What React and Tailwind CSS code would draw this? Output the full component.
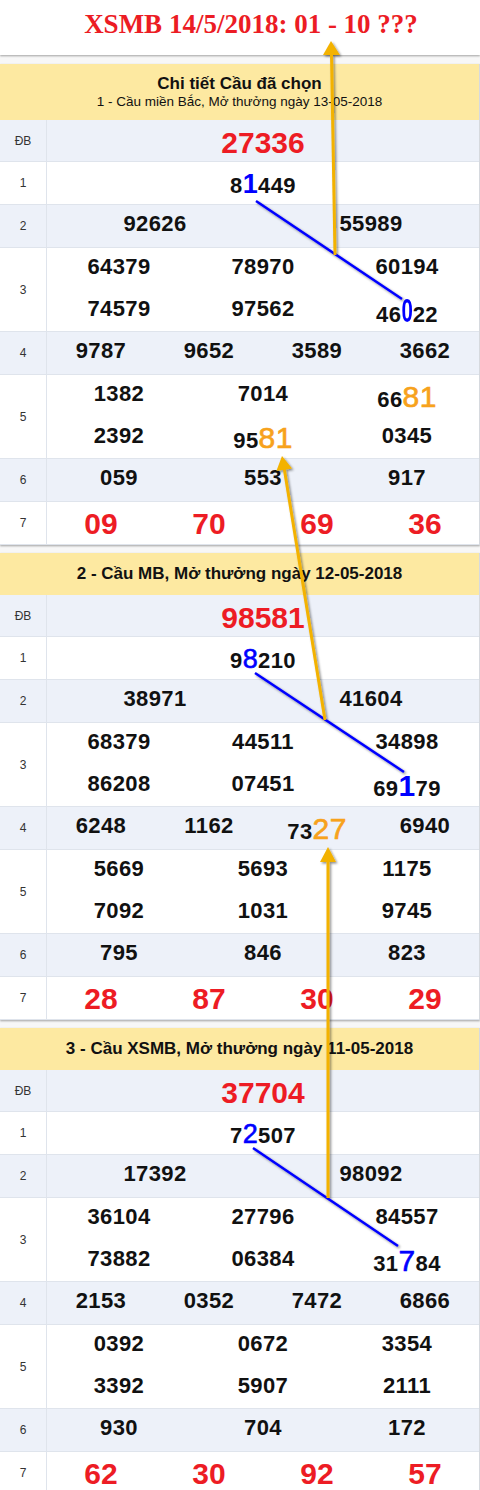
import React from "react";

const HI = {
  b1: "text-[#0000ff] text-[27px] font-bold",
  b0: "inline-block text-[#0000ff] text-[33px] font-bold scale-x-[0.62] -mx-[3.5px] tracking-normal",
  b8: "text-[#0000ff] text-[27px] font-normal [-webkit-text-stroke:0.6px_#0000ff]",
  b1b: "text-[#0000ff] text-[30px] font-bold",
  b2: "text-[#0000ff] text-[27px] font-normal [-webkit-text-stroke:0.6px_#0000ff]",
  b7: "text-[#0000ff] text-[30px] font-normal [-webkit-text-stroke:0.6px_#0000ff]",
  o: "text-[#f7a21c] text-[30px] font-normal [-webkit-text-stroke:0.7px_#f7a21c]",
};

const SECTIONS = [
  {
    db: "27336",
    r1: [["8"], ["1", "b1"], ["449"]],
    r2: ["92626", "55989"],
    r3: [
      ["64379", "78970", "60194"],
      ["74579", "97562", [["46"], ["0", "b0"], ["22"]]],
    ],
    r4: ["9787", "9652", "3589", "3662"],
    r5: [
      ["1382", "7014", [["66"], ["81", "o"]]],
      ["2392", [["95"], ["81", "o"]], "0345"],
    ],
    r6: ["059", "553", "917"],
    r7: ["09", "70", "69", "36"],
  },
  {
    db: "98581",
    r1: [["9"], ["8", "b8"], ["210"]],
    r2: ["38971", "41604"],
    r3: [
      ["68379", "44511", "34898"],
      ["86208", "07451", [["69"], ["1", "b1b"], ["79"]]],
    ],
    r4: ["6248", "1162", [["73"], ["27", "o"]], "6940"],
    r5: [
      ["5669", "5693", "1175"],
      ["7092", "1031", "9745"],
    ],
    r6: ["795", "846", "823"],
    r7: ["28", "87", "30", "29"],
  },
  {
    db: "37704",
    r1: [["7"], ["2", "b2"], ["507"]],
    r2: ["17392", "98092"],
    r3: [
      ["36104", "27796", "84557"],
      ["73882", "06384", [["31"], ["7", "b7"], ["84"]]],
    ],
    r4: ["2153", "0352", "7472", "6866"],
    r5: [
      ["0392", "0672", "3354"],
      ["3392", "5907", "2111"],
    ],
    r6: ["930", "704", "172"],
    r7: ["62", "30", "92", "57"],
  },
];

function Num({ v }) {
  if (typeof v === "string") return <span>{v}</span>;
  return (
    <span>
      {v.map((s, i) =>
        s.length === 1 ? (
          <span key={i}>{s[0]}</span>
        ) : (
          <span key={i} className={HI[s[1]]}>
            {s[0]}
          </span>
        )
      )}
    </span>
  );
}

function Line({ v, tall }) {
  const hi = typeof v !== "string";
  return (
    <div
      className={`flex ${tall ? "h-[42px]" : "h-[41px]"} items-center justify-center text-[22px] font-bold leading-[22px] tracking-[0.4px] text-[#111] ${
        hi ? "pt-[4px]" : "pb-[4px]"
      }`}
    >
      <Num v={v} />
    </div>
  );
}

function Row({ label, alt, children }) {
  return (
    <div
      className={`flex border-b border-[#dfe4ec] ${
        alt ? "bg-[#edf1f9]" : "bg-white"
      }`}
    >
      <div className="flex w-[47px] shrink-0 items-center justify-center border-r border-[#dfe4ec] text-[12px] text-[#333]">
        {label}
      </div>
      <div className="min-w-0 flex-1">{children}</div>
    </div>
  );
}

function Grid({ items, cols }) {
  const cls =
    cols === 2 ? "grid grid-cols-2" : cols === 3 ? "grid grid-cols-3" : "grid grid-cols-4";
  return (
    <div className={cls}>
      {items.map((v, i) => (
        <Line key={i} v={v} tall />
      ))}
    </div>
  );
}

function Double({ lines }) {
  return (
    <div>
      <div className="grid grid-cols-3">
        {lines[0].map((v, i) => (
          <Line key={i} v={v} tall />
        ))}
      </div>
      <div className="grid grid-cols-3">
        {lines[1].map((v, i) => (
          <Line key={i} v={v} />
        ))}
      </div>
    </div>
  );
}

function Table({ s }) {
  return (
    <div>
      <Row label="ĐB" alt>
        <div className="flex h-[41px] items-center justify-center pt-[4px] text-[30px] font-bold leading-[30px] text-[#ed1c24]">
          {s.db}
        </div>
      </Row>
      <Row label="1">
        <Line v={s.r1} tall />
      </Row>
      <Row label="2" alt>
        <Grid items={s.r2} cols={2} />
      </Row>
      <Row label="3">
        <Double lines={s.r3} />
      </Row>
      <Row label="4" alt>
        <Grid items={s.r4} cols={4} />
      </Row>
      <Row label="5">
        <Double lines={s.r5} />
      </Row>
      <Row label="6" alt>
        <Grid items={s.r6} cols={3} />
      </Row>
      <Row label="7">
        <div className="grid h-[42px] grid-cols-4 pt-[2px] text-[30px] font-bold leading-[30px] text-[#ed1c24]">
          {s.r7.map((v, i) => (
            <div key={i} className="flex items-center justify-center">
              {v}
            </div>
          ))}
        </div>
      </Row>
    </div>
  );
}

export default function App() {
  return (
    <div className="relative min-h-[1490px] w-[480px] overflow-hidden bg-[#f7f7f7] font-['Liberation_Sans',Arial,sans-serif]">
      <div className="h-[55px] bg-white pl-[22px] pt-[8px] text-center font-['Liberation_Serif','Times_New_Roman',serif] text-[27px] font-bold leading-[32px] text-[#ec1c24] shadow-[0_1px_2px_rgba(0,0,0,0.35)]">
        XSMB 14/5/2018: 01 - 10 ???
      </div>

      <div className="mt-[9px] border-r border-[#d6d9de] shadow-[0_1px_2px_rgba(0,0,0,0.35)]">
        <div className="flex h-[56px] flex-col items-center justify-center bg-[#fde9a1] text-[#111]">
          <div className="text-[17px] font-bold leading-[18px]">Chi tiết Cầu đã chọn</div>
          <div className="mt-[1px] text-[13.5px] leading-[16px]">
            1 - Cầu miền Bắc, Mở thưởng ngày 13-05-2018
          </div>
        </div>
        <Table s={SECTIONS[0]} />
      </div>

      <div className="mt-[8px] border-r border-[#d6d9de] shadow-[0_1px_2px_rgba(0,0,0,0.35)]">
        <div className="flex h-[42px] items-center justify-center bg-[#fde9a1] text-[17px] font-bold text-[#111]">
          2 - Cầu MB, Mở thưởng ngày 12-05-2018
        </div>
        <Table s={SECTIONS[1]} />
      </div>

      <div className="mt-[8px] border-r border-[#d6d9de] shadow-[0_1px_2px_rgba(0,0,0,0.35)]">
        <div className="flex h-[42px] items-center justify-center bg-[#fde9a1] text-[17px] font-bold text-[#111]">
          3 - Cầu XSMB, Mở thưởng ngày 11-05-2018
        </div>
        <Table s={SECTIONS[2]} />
      </div>

      <svg
        className="pointer-events-none absolute left-0 top-0"
        width="480"
        height="1490"
        viewBox="0 0 480 1490"
      >
        <defs>
          <filter
            id="sh"
            filterUnits="userSpaceOnUse"
            x="0"
            y="0"
            width="480"
            height="1490"
          >
            <feDropShadow dx="1.5" dy="1.5" stdDeviation="1.2" floodColor="#000" floodOpacity="0.45" />
          </filter>
        </defs>
        <g filter="url(#sh)">
          <line x1="256" y1="201" x2="402" y2="299" stroke="#0000ff" strokeWidth="2.5" />
          <line x1="255" y1="673" x2="404" y2="772" stroke="#0000ff" strokeWidth="2.5" />
          <line x1="253" y1="1148" x2="398" y2="1246" stroke="#0000ff" strokeWidth="2.5" />

          <line x1="335" y1="255" x2="331.5" y2="54" stroke="#f3b200" strokeWidth="3" />
          <polygon points="331,41 323,55 340,55" fill="#f3b200" />

          <line x1="325" y1="720" x2="284.3" y2="469" stroke="#f3b200" strokeWidth="3" />
          <polygon points="282,456 276.4,471.1 292.1,468.5" fill="#f3b200" />

          <line x1="328" y1="1198" x2="328" y2="860" stroke="#f3b200" strokeWidth="3" />
          <polygon points="328,847 320,862 336,862" fill="#f3b200" />
        </g>
      </svg>
    </div>
  );
}
